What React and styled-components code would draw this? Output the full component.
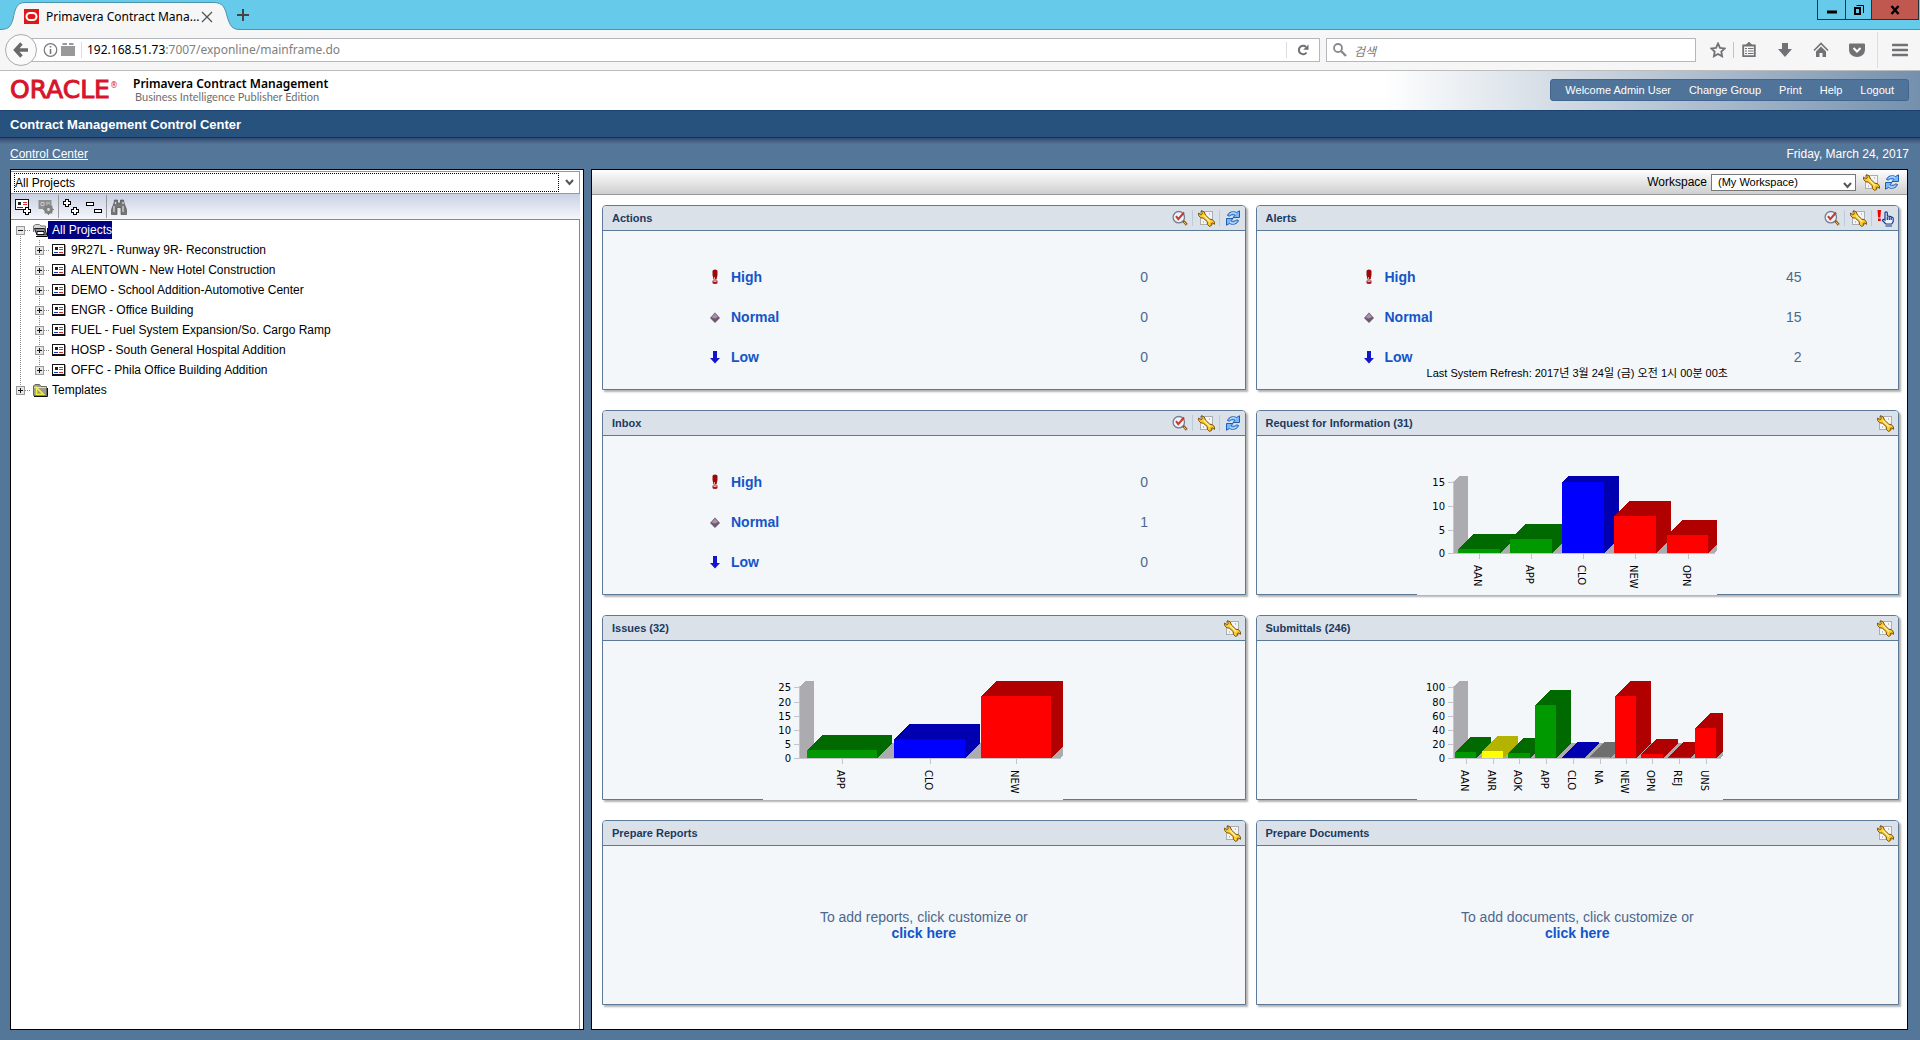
import React from 'react'
import styled, { createGlobalStyle } from 'styled-components'

const projects = [
  '9R27L - Runway 9R- Reconstruction',
  'ALENTOWN - New Hotel Construction',
  'DEMO - School Addition-Automotive Center',
  'ENGR - Office Building',
  'FUEL - Fuel System Expansion/So. Cargo Ramp',
  'HOSP - South General Hospital Addition',
  'OFFC - Phila Office Building Addition',
]

const colors = {
  green: ['#009a00', '#006a00'],
  blue: ['#0000ff', '#0000b0'],
  red: ['#ff0000', '#b00000'],
  yellow: ['#ffff00', '#b4b400'],
  gray: ['#a0a0a0', '#6e6e6e'],
}

// bars: left, right, top of the front face
const rfiChart = {
  width: 300,
  ticks: [['15', 46], ['10', 70], ['5', 94], ['0', 117]],
  bars: [
    { name: 'AAN', left: 41, right: 83, top: 113, color: 'green' },
    { name: 'APP', left: 93, right: 135, top: 103, color: 'green' },
    { name: 'CLO', left: 145, right: 187, top: 46, color: 'blue' },
    { name: 'NEW', left: 197, right: 239, top: 80, color: 'red' },
    { name: 'OPN', left: 250, right: 291, top: 99, color: 'red' },
  ],
}

const issuesChart = {
  width: 300,
  ticks: [['25', 46], ['20', 61], ['15', 75], ['10', 89], ['5', 103], ['0', 117]],
  bars: [
    { name: 'APP', left: 44, right: 114, top: 109, color: 'green' },
    { name: 'CLO', left: 131, right: 202, top: 98, color: 'blue' },
    { name: 'NEW', left: 218, right: 288, top: 55, color: 'red' },
  ],
}

const submittalsChart = {
  width: 306,
  ticks: [['100', 46], ['80', 61], ['60', 75], ['40', 89], ['20', 103], ['0', 117]],
  bars: [
    { name: 'AAN', left: 38, right: 59, top: 111, color: 'green' },
    { name: 'ANR', left: 65, right: 86, top: 110, color: 'yellow' },
    { name: 'AOK', left: 91, right: 113, top: 112, color: 'green' },
    { name: 'APP', left: 118, right: 139, top: 64, color: 'green' },
    { name: 'CLO', left: 145, right: 167, top: 116, color: 'blue' },
    { name: 'NA', left: 172, right: 193, top: 116, color: 'gray' },
    { name: 'NEW', left: 198, right: 219, top: 55, color: 'red' },
    { name: 'OPN', left: 224, right: 246, top: 113, color: 'red' },
    { name: 'REJ', left: 251, right: 273, top: 116, color: 'red' },
    { name: 'UNS', left: 278, right: 299, top: 87, color: 'red' },
  ],
}

function BarChart({ title, data }) {
  const { width, ticks, bars } = data
  return (
    <ChartSvg width={width} height='159' role='img' aria-label={title}>
      <rect width={width} height='159' fill='#f3f7fa' />
      <svg y='40' width={width} height='78' viewBox={`0 40 ${width} 78`} shapeRendering='crispEdges'>
        <polygon points={`37,117 52,102 ${width},102 ${width},114 ${width - 3},117`} fill='#acacb0' />
        <polygon points='37,45 42,40 51,40 51,103 37,117' fill='#acacb0' />
        {bars.map(({ name, left: l, right: r, top: t, color }) => (
          <g key={name}>
            <polygon
              points={`${l},${t} ${l + 15},${t - 15} ${r + 15},${t - 15} ${r + 15},102 ${r},117 ${l},117`}
              fill={colors[color][1]}
            />
            <rect x={l} y={t} width={r - l} height={117 - t} fill={colors[color][0]} />
          </g>
        ))}
      </svg>
      <g stroke='#c4c4ca' shapeRendering='crispEdges'>
        <path d={`M36.5 45V118M31 117.5H${width - 2}`} />
        {ticks.map(([label, y]) => (
          <path key={label} d={`M31 ${y + 0.5}H37`} />
        ))}
        {bars.map((bar) => (
          <path key={bar.name} d={`M${Math.round((bar.left + bar.right) / 2) + 0.5} 118V123`} />
        ))}
      </g>
      {ticks.map(([label, y]) => (
        <text key={label} x='28' y={y + 4} textAnchor='end'>
          {label}
        </text>
      ))}
      {bars.map((bar) => (
        <text key={bar.name} transform={`translate(${Math.round((bar.left + bar.right) / 2) - 5} 129) rotate(90)`}>
          {bar.name}
        </text>
      ))}
    </ChartSvg>
  )
}

function WrenchIcon() {
  return (
    <svg width='17' height='17' viewBox='0 0 17 17' aria-hidden='true'>
      <rect x='2.5' y='1.5' width='12' height='13' fill='#f4f4f4' stroke='#a9adb4' />
      <path d='M5 12h1M11 4h1' stroke='#8b8f98' />
      <path
        d='M3.500.6 6.200 2 7.600 5.200 11.800 9.200l2.600.4 2 2.400v2.400l-1.600-1.400-1.600.4.200 2.200-2 .8-2-2.200-.2-2.600L5.400 8.200 2.800 7.800.7 5.600.6 3l2 1.800 1.600-.8z'
        fill='#ffce2e'
        stroke='#7a4e06'
        strokeWidth='1'
      />
      <path d='m6 5.500 6 6' stroke='#fff2a8' strokeWidth='1.200' />
    </svg>
  )
}

function RefreshIcon() {
  return (
    <svg width='16' height='16' viewBox='0 0 16 16' aria-hidden='true'>
      <path d='M2.500 5.500C3.500 2 8 .8 11.500 2.500L14.500.8v6.700H8l2-2.200c-2-1-4.500-.8-5.500.9z' fill='#79b8f6' stroke='#1f5cb4' />
      <path d='M13.500 10.500c-1 3.500-5.500 4.700-9 3L1.500 15.200V8.500H8l-2 2.200c2 1 4.500.8 5.500-.9z' fill='#79b8f6' stroke='#1f5cb4' />
      <path d='M5 4c1.500-1.500 4-1.500 6-.5M11 12c-1.500 1.500-4 1.500-6 .5' fill='none' stroke='#d4ebff' />
    </svg>
  )
}

function ReviewIcon() {
  return (
    <svg width='16' height='16' viewBox='0 0 16 16' aria-hidden='true'>
      <circle cx='6.800' cy='7.200' r='5.700' fill='#edf3fa' stroke='#74808f' strokeWidth='1.300' />
      <path d='m11 11 1.500 1.200 2.300 2.600' stroke='#8a5a20' strokeWidth='2.600' />
      <path d='m12 12 2.500 2.500' stroke='#f0c060' strokeWidth='1' />
      <path d='m4 6.200 2.300 3L12 2.500' fill='none' stroke='#c63a30' strokeWidth='2' />
    </svg>
  )
}

function AlertHandIcon() {
  return (
    <svg width='17' height='17' viewBox='0 0 17 17' aria-hidden='true'>
      <path d='M.5 0H4l-.6 7.500H1.100zM1 8.500h2.700V11H1z' fill='#f00000' />
      <path
        d='M8 10V3c0-1.600 2.300-1.600 2.300 0v3.500c.3-.8 1.900-.6 2 .3.400-.7 1.800-.4 1.900.5.500-.5 2-.1 2 1v3.200L14.700 14H8.800L5.500 10.500c.3-1.300 1.500-1.300 2.500-.5z'
        fill='#eef4ff'
        stroke='#123a8e'
        strokeWidth='1.200'
      />
      <path d='M10.300 7v3M12.300 7.500V10M14.200 8v2M8.500 16h6.500' stroke='#123a8e' strokeWidth='1.200' />
    </svg>
  )
}

function ProjectIcon() {
  return (
    <svg width='14' height='12' viewBox='0 0 14 12' shapeRendering='crispEdges' aria-hidden='true'>
      <path d='M0 0h13v12H0z' fill='#111' />
      <path d='M1 1h11v9H1z' fill='#fff' />
      <path d='M13 1h1v11h-1z' fill='#999' />
      <path d='M3 3h3v3H3z' fill='#222' />
      <path d='M7 3.500h4M7 5.500h4M7 8.500h4' stroke='#c83030' />
      <path d='M2 8.500h4' stroke='#2030b0' />
    </svg>
  )
}

function OpenFolderIcon() {
  return (
    <svg width='16' height='16' viewBox='0 0 16 16' aria-hidden='true'>
      <path d='M0 0h16v16H0z' fill='#fff' />
      <path d='M1.500 10V4l2-1.500h4L9 4h4.500v5' fill='#d6d6d6' stroke='#777' />
      <path d='M2.500 6.500h10L15 13H5z' fill='#8d8d9c' stroke='#222' />
      <path d='M5 9.500h7v3H5z' fill='#fff' stroke='#111' />
      <path d='M4 14.500h11.500V6' fill='none' stroke='#000' />
    </svg>
  )
}

function TemplateFolderIcon() {
  return (
    <svg width='16' height='16' viewBox='0 0 16 16' aria-hidden='true'>
      <path d='M1.500 13.500V4L3 2.500h4.500L9 4.500h5.500v9z' fill='#9c9c8c' stroke='#666' />
      <path d='M2 5.500h12' stroke='#ddd' />
      <path d='M2 14.500h13.500V6' fill='none' stroke='#111' />
      <path d='M4.500 5.500v7h7z' fill='none' stroke='#f2ee40' strokeWidth='1.600' />
    </svg>
  )
}

function TreeToggle({ open, last, root }) {
  return (
    <svg width='19' height='20' viewBox='0 0 19 20' shapeRendering='crispEdges' aria-hidden='true'>
      <path
        d={`M9.500 ${root && open ? 10 : 0}V${last ? 10 : 20}M14 10.500H19`}
        stroke='#8a8a8a'
        strokeDasharray='1 1'
      />
      <rect x='5.500' y='6.500' width='8' height='8' fill='#e6e6e6' stroke='#9a9a9a' />
      <path d={open ? 'M7 10.500h5' : 'M7 10.500h5M9.500 8v5'} stroke='#111' />
    </svg>
  )
}

function PriorityIcon({ level }) {
  return (
    <svg width='12' height='16' viewBox='0 0 12 16' aria-hidden='true'>
      {level === 'High' && (
        <>
          <path d='M3.500 2Q3.500.5 6 .5T8.500 2v4l-1 4.500h-3l-1-4.500z' fill='#9c0808' />
          <path d='M3.500 11.500h5V14q0 1-2.500 1t-2.500-1z' fill='#a81818' />
          <path d='M4.500 12.500h3M5.500 8v2' stroke='#e8a0a0' />
        </>
      )}
      {level === 'Normal' && (
        <>
          <path d='M6 3.500 11 9l-5 5-5-5z' fill='#6f5872' />
          <path d='M6 4.500 9 8 6 9.500 2.500 8.500z' fill='#a893aa' />
        </>
      )}
      {level === 'Low' && <path d='M4 2h4v7h3l-5 5.500L1 9h3z' fill='#1414cc' />}
    </svg>
  )
}

const cardIcons = {
  review: ['Review', ReviewIcon],
  customize: ['Customize', WrenchIcon],
  refresh: ['Refresh', RefreshIcon],
  alert: ['Refresh alerts', AlertHandIcon],
}

function Card({ title, tools = ['customize'], children }) {
  return (
    <CardBox>
      <CardHeader>
        <CardTitle>{title}</CardTitle>
        <CardTools>
          {tools.map((tool) => {
            const [label, Icon] = cardIcons[tool]
            return (
              <CardTool key={tool} aria-label={label}>
                <Icon />
              </CardTool>
            )
          })}
        </CardTools>
      </CardHeader>
      {children}
    </CardBox>
  )
}

function Priorities({ counts }) {
  return (
    <PriorityTable>
      <tbody>
        {['High', 'Normal', 'Low'].map((level, i) => (
          <tr key={level}>
            <IconCell>
              <PriorityIcon level={level} />
            </IconCell>
            <td>
              <StrongLink href='#'>{level}</StrongLink>
            </td>
            <CountCell>{counts[i]}</CountCell>
          </tr>
        ))}
      </tbody>
    </PriorityTable>
  )
}

function BrowserChrome() {
  return (
    <>
      <TabStrip>
        <Tab>
          <TabShape width='240' height='30' viewBox='0 0 240 30' aria-hidden='true'>
            <path
              d='M0 30V29.500C9 29.500 11 26 13 19 15 10 16 2.500 25 2.500H214C223 2.500 225 8 227 16 230 26 232 29.500 240 29.500V30z'
              fill='#f6f6f6'
            />
            <path
              d='M0 29.500C9 29.500 11 26 13 19 15 10 16 2.500 25 2.500H214C223 2.500 225 8 227 16 230 26 232 29.500 240 29.500'
              fill='none'
              stroke='#4c93ad'
            />
          </TabShape>
          <svg width='15' height='15' viewBox='0 0 15 15' aria-hidden='true'>
            <rect width='15' height='15' fill='#e01818' />
            <rect x='2.500' y='4' width='10' height='7' rx='3.500' fill='none' stroke='#fff' strokeWidth='2' />
          </svg>
          <TabTitle>Primavera Contract Mana...</TabTitle>
          <PlainButton aria-label='Close tab'>
            <svg width='12' height='12' viewBox='0 0 12 12'>
              <path d='m1 1 10 10M11 1 1 11' stroke='#555' strokeWidth='1.300' />
            </svg>
          </PlainButton>
        </Tab>
        <PlainButton aria-label='New tab'>
          <svg width='12' height='12' viewBox='0 0 12 12'>
            <path d='M6 0v12M0 6h12' stroke='#444' strokeWidth='2' />
          </svg>
        </PlainButton>
        <WindowButtons>
          <WindowButton $width='29px' aria-label='Minimize'>
            <svg width='10' height='10'>
              <path d='M0 7h10' stroke='#000' strokeWidth='3' />
            </svg>
          </WindowButton>
          <WindowButton $width='27px' aria-label='Restore'>
            <svg width='10' height='10'>
              <path d='M1 3h5v6H1z' fill='none' stroke='#000' strokeWidth='2' />
              <path d='M2.500.5h7V8' fill='none' stroke='#000' />
            </svg>
          </WindowButton>
          <WindowButton $width='48px' $close aria-label='Close'>
            <svg width='10' height='10'>
              <path d='m1.500 1 7 8m0-8-7 8' stroke='#000' strokeWidth='2.400' />
            </svg>
          </WindowButton>
        </WindowButtons>
      </TabStrip>
      <NavBar>
        <BackButton aria-label='Back'>
          <svg width='16' height='16' viewBox='0 0 16 16'>
            <path d='M8.500 1.500 2.500 8l6 6.500M3 8h12' fill='none' stroke='#6a6a6a' strokeWidth='3.400' />
          </svg>
        </BackButton>
        <UrlBox>
          <svg width='33' height='16' viewBox='0 0 33 16' aria-hidden='true'>
            <circle cx='7.500' cy='8' r='6.300' fill='none' stroke='#777' strokeWidth='1.200' />
            <path d='M7.500 7v5M7.500 4v1.500' stroke='#777' strokeWidth='1.600' />
            <path d='M18 4h14v10H18zM19.500 1h4.500v2h-4.500zM26 1h4.500v2H26z' fill='#999' />
          </svg>
          <UrlText>
            192.168.51.73<span>:7007/exponline/mainframe.do</span>
          </UrlText>
          <ReloadButton aria-label='Reload'>
            <svg width='12' height='12' viewBox='0 0 12 12'>
              <path d='M9.500 8.500A4.200 4.200 0 1 1 9 3' fill='none' stroke='#707070' strokeWidth='2' />
              <path d='M11.500.5v5.300H6.200z' fill='#707070' />
            </svg>
          </ReloadButton>
        </UrlBox>
        <SearchBox>
          <svg width='14' height='14' viewBox='0 0 14 14' aria-hidden='true'>
            <circle cx='5' cy='5' r='4' fill='none' stroke='#8a8a8a' strokeWidth='1.800' />
            <path d='m8 8 5 5' stroke='#8a8a8a' strokeWidth='2.400' />
          </svg>
          <input aria-label='검색' placeholder='검색' />
        </SearchBox>
        <BrowserTools>
          <PlainButton aria-label='Bookmark'>
            <svg width='16' height='16' viewBox='0 0 16 16'>
              <path d='m8 1.500 2 4.300 4.700.6-3.400 3.200.8 4.700L8 12l-4.100 2.300.8-4.700L1.300 6.400 6 5.800z' fill='none' stroke='#707276' strokeWidth='1.800' />
            </svg>
          </PlainButton>
          <ToolDivider />
          <PlainButton aria-label='Bookmarks list'>
            <svg width='16' height='16' viewBox='0 0 16 16'>
              <path d='M2.200 3.500h11.600v10.700H2.200z' fill='none' stroke='#707276' strokeWidth='1.800' />
              <path d='M5.500 3 8 .5 10.500 3zM4 6.500h2M7 6.500h5.500M4 9h2M7 9h5.500M4 11.500h2M7 11.500h5.500' fill='#707276' stroke='#707276' strokeWidth='1.200' />
            </svg>
          </PlainButton>
          <PlainButton aria-label='Downloads'>
            <svg width='16' height='16' viewBox='0 0 16 16'>
              <path d='M5 1h6v6h4l-7 8-7-8h4z' fill='#707276' />
            </svg>
          </PlainButton>
          <PlainButton aria-label='Home'>
            <svg width='16' height='16' viewBox='0 0 16 16'>
              <path d='m1 8.500 7-7 7 7' fill='none' stroke='#707276' strokeWidth='1.600' />
              <path d='m8 4.500 5 5V15H9.500v-4h-3v4H3V9.500z' fill='#707276' />
            </svg>
          </PlainButton>
          <PlainButton aria-label='Pocket'>
            <svg width='16' height='16' viewBox='0 0 16 16'>
              <path d='M1 1.500h14q1 0 1 1V8a8 7 0 0 1-16 0V2.500q0-1 1-1z' fill='#707276' />
              <path d='m4.500 6 3.500 3.500L11.500 6' fill='none' stroke='#fff' strokeWidth='2' />
            </svg>
          </PlainButton>
        </BrowserTools>
        <MenuButton aria-label='Menu'>
          <svg width='16' height='14' viewBox='0 0 16 14'>
            <path d='M1 2h14M1 7h14M1 12h14' stroke='#707276' strokeWidth='2.600' strokeLinecap='round' />
          </svg>
        </MenuButton>
      </NavBar>
    </>
  )
}

function Sidebar() {
  return (
    <SidebarPanel>
      <FilterRow>
        <FilterSelect aria-label='Project filter'>
          <option>All Projects</option>
        </FilterSelect>
        <svg width='9' height='7' viewBox='0 0 9 7' aria-hidden='true'>
          <path d='m1 1 3.500 4L8 1' fill='none' stroke='#555' strokeWidth='2' />
        </svg>
      </FilterRow>
      <TreeToolbar>
        <PlainButton aria-label='Add project'>
          <svg width='16' height='16' viewBox='0 0 16 16' shapeRendering='crispEdges'>
            <path d='M0 0h14v11H0z' fill='#111' />
            <path d='M1 1h12v9H1z' fill='#fff' />
            <path d='M3 3h3v3H3z' fill='#222' />
            <path d='M8 3.500h4M8 5.500h4' stroke='#d03030' />
            <path d='M2 8.500h6' stroke='#2030b0' />
            <path d='M10.500 8.500h3v2h2v3h-2v2h-3v-2h-2v-3h2z' fill='#fff' stroke='#000' />
          </svg>
        </PlainButton>
        <PlainButton aria-label='Project settings'>
          <svg width='16' height='16' viewBox='0 0 16 16'>
            <path d='M.5 1h13v9H.5z' fill='#8f8f8f' />
            <path d='M3 3.500h3v3H3zM8 4h4M8 6h4' stroke='#c8c8c8' fill='none' />
            <circle cx='10.500' cy='10.500' r='3.200' fill='none' stroke='#808080' strokeWidth='2.600' />
            <path d='M10.500 5v11M5 10.500h11M6.700 6.700l7.600 7.600M14.300 6.700l-7.600 7.600' stroke='#808080' strokeWidth='1.200' />
            <circle cx='10.500' cy='10.500' r='1.400' fill='#ddd' />
          </svg>
        </PlainButton>
        <ToolbarDivider />
        <PlainButton aria-label='Expand all'>
          <svg width='16' height='16' viewBox='0 0 16 16' shapeRendering='crispEdges'>
            <path
              d='M2.500.5h3v2h2v3h-2v2h-3v-2h-2v-3h2zM10.500 8.500h3v2h2v3h-2v2h-3v-2h-2v-3h2z'
              fill='#fff'
              stroke='#000'
            />
          </svg>
        </PlainButton>
        <PlainButton aria-label='Collapse all'>
          <svg width='16' height='16' viewBox='0 0 16 16' shapeRendering='crispEdges'>
            <path d='M.5 3.500h7v3h-7zM8.500 10.500h7v3h-7z' fill='#fff' stroke='#000' />
          </svg>
        </PlainButton>
        <ToolbarDivider />
        <PlainButton aria-label='Find'>
          <svg width='16' height='16' viewBox='0 0 16 16'>
            <path d='M3.500 1h3v3h3V1h3l.5 3 2.500 6.500v5H10V8.500H6v7H.5v-5L3 4z' fill='#777' stroke='#444' strokeWidth='.6' />
            <path d='M4.500 3v2M3 7v6M12 3v2M12 7v6' stroke='#d4d4d4' strokeWidth='1.300' />
          </svg>
        </PlainButton>
      </TreeToolbar>
      <Tree>
        <TreeRow>
          <PlainButton aria-label='Collapse All Projects'>
            <TreeToggle root open />
          </PlainButton>
          <TreeIcon>
            <OpenFolderIcon />
          </TreeIcon>
          <TreeLabel href='#' $selected>
            All Projects
          </TreeLabel>
        </TreeRow>
        {projects.map((name, i) => (
          <TreeRow key={name}>
            <TreeGuide width='19' height='20' aria-hidden='true'>
              <path d='M9.500 0V20' stroke='#8a8a8a' strokeDasharray='1 1' />
            </TreeGuide>
            <PlainButton aria-label={`Expand ${name}`}>
              <TreeToggle last={i === projects.length - 1} />
            </PlainButton>
            <TreeIcon $child>
              <ProjectIcon />
            </TreeIcon>
            <TreeLabel href='#'>{name}</TreeLabel>
          </TreeRow>
        ))}
        <TreeRow>
          <PlainButton aria-label='Expand Templates'>
            <TreeToggle root last />
          </PlainButton>
          <TreeIcon>
            <TemplateFolderIcon />
          </TreeIcon>
          <TreeLabel href='#'>Templates</TreeLabel>
        </TreeRow>
      </Tree>
    </SidebarPanel>
  )
}

function App() {
  return (
    <Page>
      <GlobalStyle />
      <BrowserChrome />
      <Header>
        <Logo>
          ORACLE<sup>®</sup>
        </Logo>
        <Product>
          <ProductName>Primavera Contract Management</ProductName>
          <ProductEdition>Business Intelligence Publisher Edition</ProductEdition>
        </Product>
        <UserNav>
          <span>Welcome Admin User</span>
          <a href='#'>Change Group</a>
          <a href='#'>Print</a>
          <a href='#'>Help</a>
          <a href='#'>Logout</a>
        </UserNav>
      </Header>
      <TitleBar>Contract Management Control Center</TitleBar>
      <Breadcrumb>
        <a href='#'>Control Center</a>
        <span>Friday, March 24, 2017</span>
      </Breadcrumb>
      <Main>
        <Sidebar />
        <Workspace>
          <WorkspaceBar>
            <label htmlFor='workspace'>Workspace</label>
            <SelectWrap>
              <WorkspaceSelect id='workspace'>
                <option>(My Workspace)</option>
              </WorkspaceSelect>
              <svg width='9' height='7' viewBox='0 0 9 7' aria-hidden='true'>
                <path d='m1 1 3.500 4L8 1' fill='none' stroke='#555' strokeWidth='2' />
              </svg>
            </SelectWrap>
            <PlainButton aria-label='Customize workspace'>
              <WrenchIcon />
            </PlainButton>
            <PlainButton aria-label='Refresh workspace'>
              <RefreshIcon />
            </PlainButton>
          </WorkspaceBar>
          <Cards>
            <Card title='Actions' tools={['review', 'customize', 'refresh']}>
              <Priorities counts={[0, 0, 0]} />
            </Card>
            <Card title='Alerts' tools={['review', 'customize', 'alert']}>
              <Priorities counts={[45, 15, 2]} />
              <RefreshNote>Last System Refresh: 2017년 3월 24일 (금) 오전 1시 00분 00초</RefreshNote>
            </Card>
            <Card title='Inbox' tools={['review', 'customize', 'refresh']}>
              <Priorities counts={[0, 1, 0]} />
            </Card>
            <Card title='Request for Information (31)'>
              <BarChart title='Request for Information' data={rfiChart} />
            </Card>
            <Card title='Issues (32)'>
              <BarChart title='Issues' data={issuesChart} />
            </Card>
            <Card title='Submittals (246)'>
              <BarChart title='Submittals' data={submittalsChart} />
            </Card>
            <Card title='Prepare Reports'>
              <EmptyMessage>
                To add reports, click customize or
                <StrongLink href='#'>click here</StrongLink>
              </EmptyMessage>
            </Card>
            <Card title='Prepare Documents'>
              <EmptyMessage>
                To add documents, click customize or
                <StrongLink href='#'>click here</StrongLink>
              </EmptyMessage>
            </Card>
          </Cards>
        </Workspace>
      </Main>
    </Page>
  )
}

export default App

const GlobalStyle = createGlobalStyle`
  * {
    box-sizing: border-box;
  }

  body {
    margin: 0;
    background: #547699;
    font-family: 'Liberation Sans', 'Noto Sans CJK KR', sans-serif;
    font-size: 12px;
    color: #000;
  }

  svg {
    display: block;
    flex: none;
  }
`

const Page = styled.div`
  display: flex;
  flex-direction: column;
  min-height: 100vh;
`

const PlainButton = styled.button`
  display: flex;
  align-items: center;
  padding: 0;
  border: none;
  background: none;
  cursor: pointer;
`

const TabStrip = styled.div`
  display: flex;
  align-items: center;
  height: 30px;
  background: #66caea;
  border-bottom: 1px solid #4c93ad;
  font-family: 'Noto Sans', sans-serif;
`

const Tab = styled.div`
  position: relative;
  display: flex;
  align-items: center;
  width: 237px;
  height: 30px;
  padding: 3px 24px 0;
  margin-bottom: -1px;

  > * {
    position: relative;
  }
`

const TabShape = styled.svg`
  && {
    position: absolute;
    left: 0;
    top: 0;
  }
`

const TabTitle = styled.span`
  flex: 1;
  margin-left: 7px;
  white-space: nowrap;
`

const WindowButtons = styled.div`
  display: flex;
  align-self: flex-start;
  margin-left: auto;
  margin-right: 1px;
`

const WindowButton = styled.button`
  display: flex;
  align-items: center;
  justify-content: center;
  width: ${(props) => props.$width};
  height: 20px;
  padding: 0;
  border: 1px solid #24333a;
  border-top: none;
  margin-left: -1px;
  background: ${(props) => (props.$close ? '#c1584f' : '#66caea')};
`

const NavBar = styled.div`
  display: flex;
  align-items: center;
  height: 41px;
  padding-left: 5px;
  background: #f6f6f6;
  border-bottom: 1px solid #bdbdbd;
`

const BackButton = styled.button`
  position: relative;
  display: flex;
  align-items: center;
  justify-content: center;
  width: 32px;
  height: 32px;
  padding: 0;
  border: 1px solid #a8abb0;
  border-radius: 50%;
  background: #fafafa;
`

const UrlBox = styled.div`
  display: flex;
  align-items: center;
  flex: 1;
  height: 24px;
  padding-left: 12px;
  margin-left: -6px;
  border: 1px solid #b4b7bc;
  border-left: none;
  background: #fff;
`

const UrlText = styled.div`
  flex: 1;
  padding-left: 5px;
  margin-left: 5px;
  border-left: 1px solid #ddd;
  font-family: 'Noto Sans', sans-serif;
  line-height: 16px;

  span {
    color: #808080;
  }
`

const ReloadButton = styled(PlainButton)`
  justify-content: center;
  width: 33px;
  height: 16px;
  border-left: 1px solid #ddd;
`

const SearchBox = styled.div`
  display: flex;
  align-items: center;
  width: 370px;
  height: 24px;
  padding-left: 6px;
  margin-left: 6px;
  border: 1px solid #b4b7bc;
  background: #fff;

  input {
    flex: 1;
    min-width: 0;
    padding: 0 7px;
    border: none;
    outline: none;
    background: none;
    font-family: 'Noto Sans CJK KR', sans-serif;
    font-size: 12px;
    font-style: italic;
  }

  input::placeholder {
    color: #777;
  }
`

const BrowserTools = styled.div`
  display: flex;
  align-items: center;
  gap: 20px;
  padding: 0 12px 0 14px;
  border-right: 1px solid #ddd;
  height: 36px;
`

const ToolDivider = styled.span`
  width: 1px;
  height: 16px;
  margin: 0 -13px;
  background: #c4c4c4;
`

const MenuButton = styled(PlainButton)`
  padding: 0 12px 0 14px;
`

const Header = styled.header`
  display: flex;
  align-items: center;
  height: 39px;
  padding: 0 11px 2px 10px;
  background: linear-gradient(to right, #fff 72%, #c4d0dc 84%, #7490ad 100%);
`

const Logo = styled.div`
  width: 123px;
  color: #d8142c;
  font-family: 'DejaVu Sans', sans-serif;
  font-size: 25px;
  line-height: 30px;
  white-space: nowrap;
  -webkit-text-stroke: 1px #d8142c;

  sup {
    font-size: 8px;
    line-height: 8px;
    vertical-align: 10px;
    -webkit-text-stroke: 0;
  }
`

const Product = styled.div`
  flex: 1;
  line-height: 13px;
`

const ProductName = styled.div`
  font-family: 'Noto Sans', sans-serif;
  font-size: 12px;
  font-weight: 600;
`

const ProductEdition = styled.div`
  padding-left: 2px;
  color: #6e6e6e;
  font-family: Lato, sans-serif;
  font-size: 11px;
`

const UserNav = styled.nav`
  display: flex;
  align-items: center;
  gap: 18px;
  height: 22px;
  padding: 0 14px;
  border: 1px solid #3f6590;
  border-radius: 3px;
  background: #4f7399;
  color: #fff;
  font-size: 11px;

  a {
    color: #fff;
    text-decoration: none;
  }
`

const TitleBar = styled.h1`
  height: 28px;
  margin: 0;
  padding-left: 10px;
  border-top: 1px solid #1b426e;
  border-bottom: 1px solid #11335c;
  background: #28527e;
  color: #fff;
  font-size: 13px;
  line-height: 27px;
`

const Breadcrumb = styled.div`
  display: flex;
  align-items: center;
  justify-content: space-between;
  height: 31px;
  padding: 0 11px 0 10px;
  background: linear-gradient(#33486f, #547699 6px);
  color: #fff;

  a {
    color: #fff;
  }
`

const Main = styled.main`
  display: flex;
  flex: 1;
  gap: 7px;
  padding: 0 12px 10px 10px;
`

const SidebarPanel = styled.aside`
  display: flex;
  flex-direction: column;
  width: 574px;
  padding: 1px 3px 0 0;
  border: 1px solid #000;
  background: #fff;
`

const FilterRow = styled.div`
  display: flex;
  align-items: center;
  gap: 6px;
  height: 23px;
  padding: 0 5px 0 3px;
  border: 1px solid #999;
  border-left: none;
`

const FilterSelect = styled.select`
  appearance: none;
  flex: 1;
  height: 19px;
  padding: 0;
  border: 1px dotted #000;
  border-radius: 0;
  outline: none;
  background: #fff;
  color: #000;
  font: 12px 'Liberation Sans', sans-serif;
`

const TreeToolbar = styled.div`
  display: flex;
  align-items: center;
  gap: 7px;
  height: 26px;
  padding-left: 4px;
  border-bottom: 1px solid #888;
  background: linear-gradient(#c9d1e3, #f4f6fb);
`

const ToolbarDivider = styled.span`
  width: 1px;
  height: 23px;
  margin: 0 -3px;
  background: #999;
`

const Tree = styled.div`
  flex: 1;
  border-right: 1px solid #888;
`

const TreeRow = styled.div`
  display: flex;
  align-items: center;
  height: 20px;
`

const TreeGuide = styled.svg`
  shape-rendering: crispEdges;
`

const TreeIcon = styled.span`
  width: ${(props) => (props.$child ? '15px' : '16px')};
  margin-left: ${(props) => (props.$child ? '3px' : '2px')};
`

const TreeLabel = styled.a`
  padding-left: 4px;
  background: ${(props) => (props.$selected ? '#000080' : 'none')};
  color: ${(props) => (props.$selected ? '#fff' : '#000')};
  line-height: 18px;
  text-decoration: none;
`

const Workspace = styled.section`
  flex: 1;
  border: 1px solid #000;
  background: #fff;
`

const WorkspaceBar = styled.div`
  display: flex;
  align-items: center;
  justify-content: flex-end;
  gap: 4px;
  height: 25px;
  padding-right: 7px;
  border-bottom: 1px solid #999;
  background: linear-gradient(#fefefe, #cfcfcf);
`

const SelectWrap = styled.div`
  position: relative;
  margin-right: 3px;

  svg {
    position: absolute;
    right: 4px;
    bottom: 2px;
    pointer-events: none;
  }
`

const WorkspaceSelect = styled.select`
  appearance: none;
  display: block;
  width: 145px;
  height: 17px;
  padding: 0 6px;
  border: 1px solid #777;
  border-radius: 0;
  background: #fff;
  color: #000;
  font: 11px 'Liberation Sans', sans-serif;
`

const Cards = styled.div`
  display: grid;
  grid-template-columns: 1fr 1fr;
  gap: 20px 10px;
  padding: 10px 8px 24px 10px;
`

const CardBox = styled.article`
  display: flex;
  flex-direction: column;
  min-height: 185px;
  border: 1px solid #5c7a98;
  border-radius: 4px 4px 0 0;
  background: #f3f7fa;
  box-shadow: 2px 2px 2px rgba(0, 0, 0, 0.3);
`

const CardHeader = styled.div`
  display: flex;
  align-items: center;
  justify-content: space-between;
  height: 25px;
  padding: 0 4px 0 9px;
  border-bottom: 1px solid #5c7a98;
  border-radius: 3px 3px 0 0;
  background: #dae1e9;
`

const CardTitle = styled.h2`
  margin: 0;
  color: #1a3a5f;
  font-size: 11px;
`

const CardTools = styled.div`
  display: flex;
`

const CardTool = styled(PlainButton)`
  height: 16px;

  & + & {
    padding-left: 5px;
    margin-left: 4px;
    border-left: 1px solid #bccadb;
  }
`

const PriorityTable = styled.table`
  width: 439px;
  margin: 26px 0 0 106px;
  border-collapse: collapse;
  font-size: 14px;

  tr {
    height: 40px;
  }

  td {
    padding: 0;
  }
`

const IconCell = styled.td`
  width: 22px;
`

const CountCell = styled.td`
  color: #4c678f;
  text-align: right;
`

const StrongLink = styled.a`
  color: #1455c8;
  font-weight: bold;
  text-decoration: none;
`

const RefreshNote = styled.div`
  margin-top: -12px;
  font-size: 11px;
  line-height: 16px;
  text-align: center;
`

const EmptyMessage = styled.div`
  display: flex;
  flex: 1;
  flex-direction: column;
  align-items: center;
  justify-content: center;
  color: #4c678f;
  font-size: 14px;
  line-height: 16px;
`

const ChartSvg = styled.svg`
  margin: 0 0 -1px 160px;

  text {
    font: 10px 'DejaVu Sans', sans-serif;
    fill: #000;
  }
`
